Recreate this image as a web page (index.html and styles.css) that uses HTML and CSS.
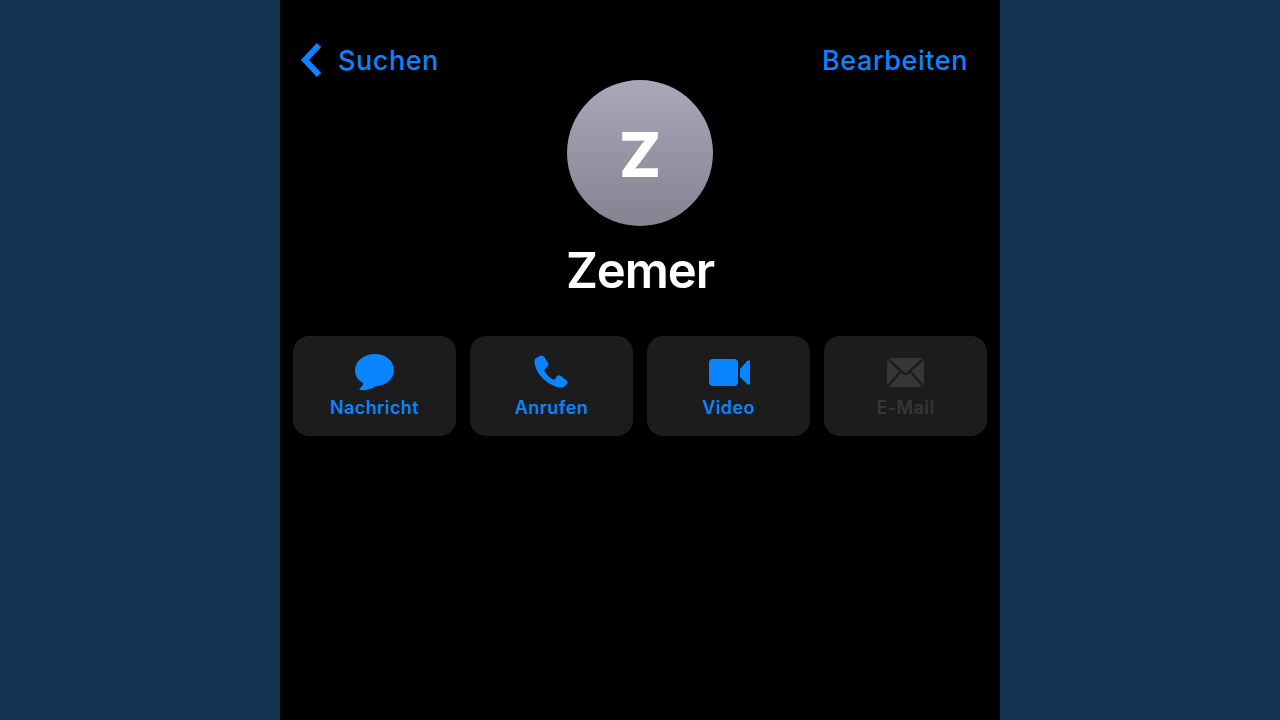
FILE: index.html
```
<!DOCTYPE html>
<html lang="de">
<head>
    <meta charset="UTF-8">
    <meta name="viewport" content="width=device-width, initial-scale=1.0">
    <title>Zemer</title>
    <link rel="stylesheet" href="styles.css">
</head>
<body>
    <div class="phone">
        <header class="top-bar">
            <a class="back">
                <svg class="chevron" width="22" height="36" viewBox="0 0 22 36"><path d="M19 3 L5 18 L19 33"/></svg>
                <span>Suchen</span>
            </a>
            <a class="edit">Bearbeiten</a>
        </header>

        <main class="contact">
            <div class="avatar"><span>Z</span></div>
            <h1>Zemer</h1>

            <div class="actions">
                <button class="action">
                    <svg width="44" height="40" viewBox="0 0 44 40"><path d="M22 2 C33 2 41 9 41 18 C41 27 33 34 23 34 C19 37 13 39 8 38 C6 38 6 37 7 36 C10 34 10 32 10 31 C5 28 2 24 2 18 C2 9 11 2 22 2 Z"/></svg>
                    <span>Nachricht</span>
                </button>
                <button class="action">
                    <svg width="44" height="40" viewBox="0 0 44 40"><path d="M6 6 L10 4 C12 3 14 4 15 6 L18 11 C19 13 18 14 17 15 L15 17 C14 18 14 19 15 20 C17 23 19 25 22 27 C23 28 24 28 25 27 L27 24 C28 23 29 23 31 24 L36 28 C38 29 38 31 37 32 L35 34 C33 36 30 36 27 35 C17 32 7 23 5 13 C4 10 4 8 6 6 Z"/></svg>
                    <span>Anrufen</span>
                </button>
                <button class="action">
                    <svg width="44" height="40" viewBox="0 0 44 40"><rect x="2" y="7" width="29" height="27" rx="4"/><path d="M33 17 L40 9 C42 8 43 8 43 10 V31 C43 33 42 33 40 32 L33 25 Z"/></svg>
                    <span>Video</span>
                </button>
                <button class="action" disabled>
                    <svg width="44" height="40" viewBox="0 0 44 40"><rect x="3" y="6" width="37" height="29" rx="5"/><path class="flap" d="M5 8 L19 21 Q21.5 23 24 21 L38 8 M5 33 L16 20 M38 33 L27 20"/></svg>
                    <span>E-Mail</span>
                </button>
            </div>
        </main>
    </div>
</body>
</html>
```

FILE: styles.css
```
body {
    margin: 0;
    height: 100vh;
    display: flex;
    justify-content: center;
    background-color: #143552;
    font-family: Inter, "Liberation Sans", sans-serif;
    overflow: hidden;
}
.phone {
    width: 720px;
    height: 720px;
    background-color: #000;
}
.top-bar {
    display: flex;
    justify-content: space-between;
    align-items: center;
    height: 40px;
    padding: 40px 32px 0 20px;
    color: #0a84ff;
    font-size: 27px;
    font-weight: 500;
    line-height: 40px;
    letter-spacing: 0.55px;
}
.back {
    display: flex;
    align-items: center;
    gap: 16px;
}
.back span,
.edit {
    padding-top: 2px;
}
.chevron {
    fill: none;
    stroke: #0a84ff;
    stroke-width: 6;
}
.contact {
    display: flex;
    flex-direction: column;
    align-items: center;
}
.avatar {
    display: flex;
    align-items: center;
    justify-content: center;
    width: 146px;
    height: 146px;
    border-radius: 50%;
    background: linear-gradient(180deg, #aaa7b9 0%, #858291 100%);
    color: #fff;
    font-size: 62px;
    font-weight: 800;
    line-height: 1;
}
.avatar span {
    padding-top: 4px;
}
h1 {
    margin: 15px 0 35px;
    color: #fff;
    font-size: 49px;
    font-weight: 600;
    line-height: 60px;
    letter-spacing: -1.1px;
}
.actions {
    display: grid;
    grid-template-columns: repeat(4, 163px);
    gap: 14px;
}
.action {
    display: flex;
    flex-direction: column;
    align-items: center;
    height: 100px;
    padding: 16px 0 0;
    border: none;
    border-radius: 16px;
    background-color: #1c1c1c;
    color: #0a84ff;
    font-family: inherit;
    font-size: 18px;
    font-weight: 600;
    line-height: 24px;
    letter-spacing: 0.4px;
}
.action svg {
    margin-bottom: 4px;
    flex-shrink: 0;
    fill: currentColor;
}
.action:disabled {
    color: #363636;
}
.flap {
    fill: none;
    stroke: #1c1c1c;
    stroke-width: 2.5;
}
```
